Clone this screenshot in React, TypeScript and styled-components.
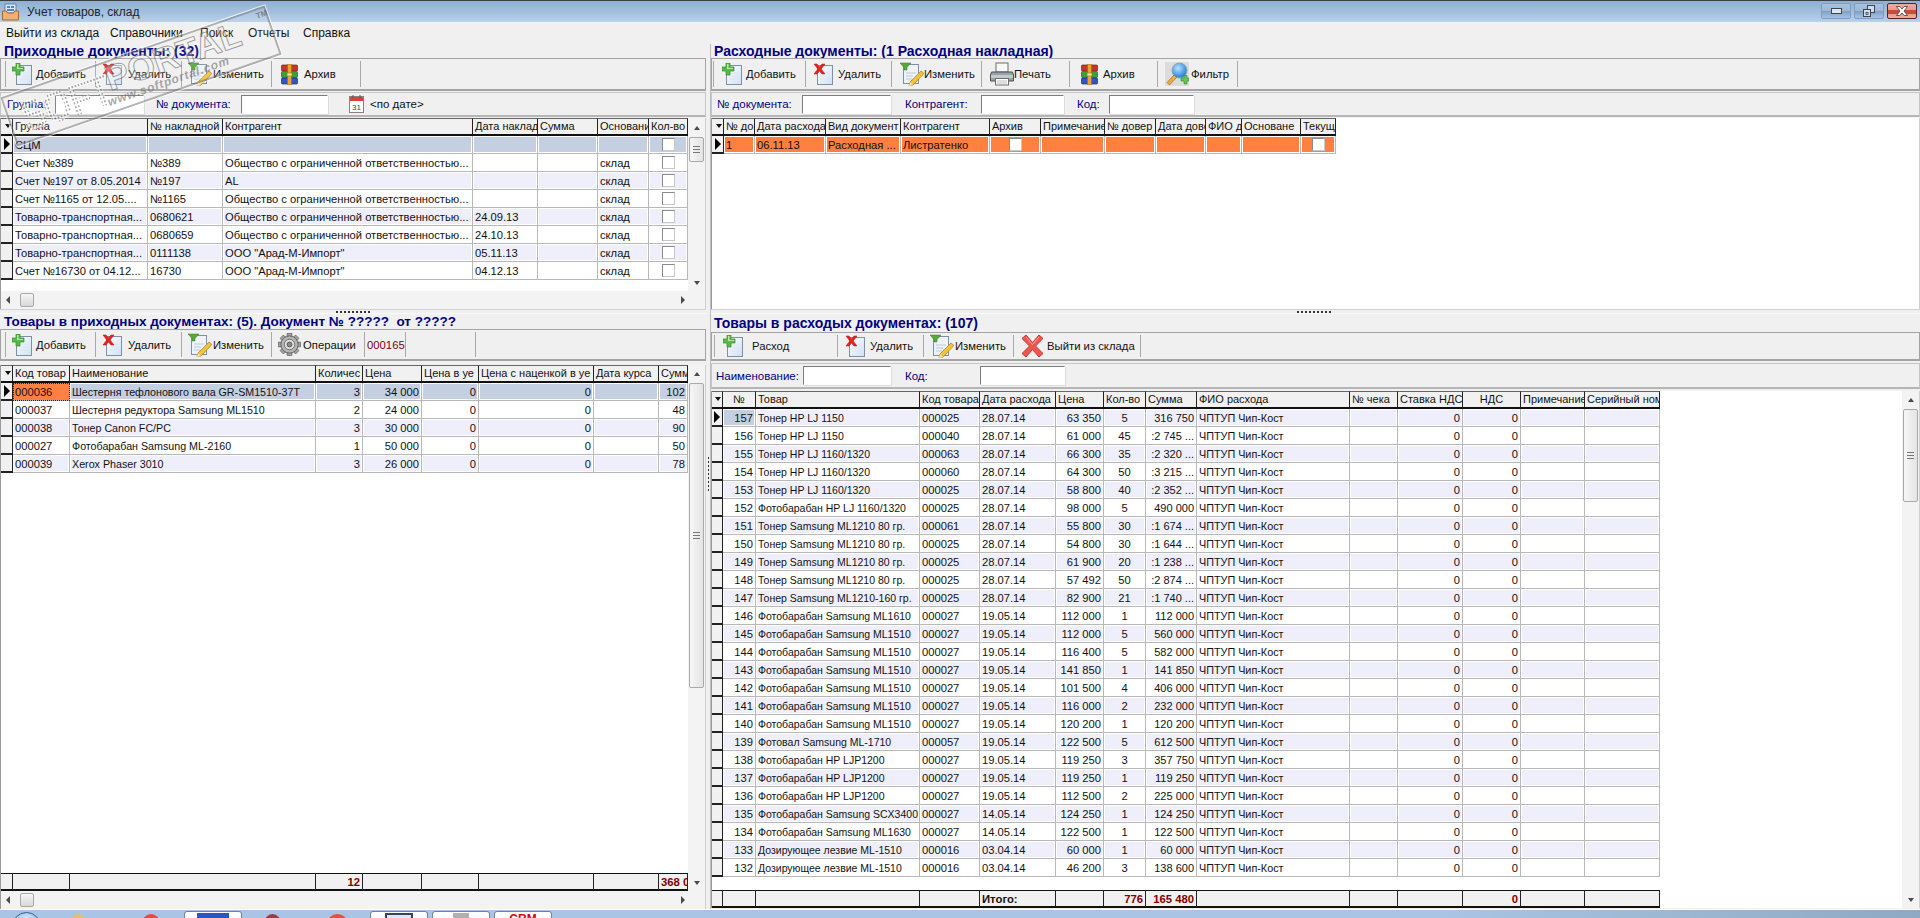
import React from "react";
import styled, { createGlobalStyle } from "styled-components";

const Global = createGlobalStyle`
  html, body { margin: 0; padding: 0; background: #f0f0f0; overflow: hidden; }
  * { box-sizing: border-box; }
`;

const FONT = `"Liberation Sans", Arial, sans-serif`;

const Win = styled.div`
  position: relative;
  width: 1920px;
  height: 918px;
  overflow: hidden;
  display: flex;
  flex-direction: column;
  background: #f0f0f0;
  font-family: ${FONT};
  font-size: 12px;
  color: #111;
`;

const TitleBar = styled.div`
  height: 22px;
  flex: none;
  border-top: 1px solid #3a3f46;
  background: linear-gradient(180deg, #8fb0d2 0%, #a4c0de 55%, #b9d1ea 100%);
  display: flex;
  align-items: center;
  padding-left: 2px;
`;
const TitleText = styled.span`
  margin-left: 8px;
  font-size: 12px;
  color: #1a2430;
`;
const WinButtons = styled.div`
  margin-left: auto;
  margin-right: 3px;
  display: flex;
  gap: 3px;
  align-self: flex-start;
  margin-top: 2px;
`;
const WinButton = styled.div<{ $close?: boolean }>`
  width: 30px;
  height: 16px;
  border: 1px solid ${(p) => (p.$close ? "#5a2028" : "#7f9cbc")};
  border-radius: 2px;
  display: flex;
  align-items: center;
  justify-content: center;
  background: ${(p) =>
    p.$close
      ? "linear-gradient(180deg,#eeaaa0 0%,#e89a90 45%,#cc4a38 46%,#cc4a38 70%,#e69a88 71%,#eeb0a0 100%)"
      : "linear-gradient(180deg,#aac4de 0%,#9cb8d6 50%,#7e9fc4 51%,#a8c4e0 100%)"};
`;

const MenuBar = styled.div`
  height: 22px;
  flex: none;
  display: flex;
  align-items: center;
  padding-left: 6px;
`;
const MenuItem = styled.span<{ $w: number }>`
  width: ${(p) => p.$w}px;
  font-size: 12px;
  white-space: nowrap;
`;

const Main = styled.div`
  flex: 1;
  min-height: 0;
  display: flex;
`;
const Column = styled.div<{ $w?: number }>`
  ${(p) => (p.$w ? `width:${p.$w}px;flex:none;` : "flex:1;min-width:0;")}
  display: flex;
  flex-direction: column;
`;
const VDivider = styled.div`
  width: 5px;
  flex: none;
  position: relative;
  border-right: 1px solid #bdbdbd;
  display: flex;
  align-items: center;
  justify-content: center;
`;
const GripV = styled.div`
  width: 1px;
  height: 34px;
  margin-top: -6px;
  background-image: repeating-linear-gradient(180deg, #333 0 2px, transparent 2px 4px);
`;
const Section = styled.div<{ $h?: number }>`
  ${(p) => (p.$h ? `height:${p.$h}px;flex:none;` : "flex:1;min-height:0;")}
  display: flex;
  flex-direction: column;
`;
const HSplit = styled.div`
  height: 5px;
  flex: none;
  display: flex;
  align-items: flex-start;
  justify-content: flex-end;
  border-bottom: 1px solid #fbfbfb;
  border-top: 1px solid #d0d0d0;
`;
const GripH = styled.div<{ $right: number }>`
  width: 35px;
  height: 2px;
  margin-top: 1px;
  margin-right: ${(p) => p.$right}px;
  background-image: repeating-linear-gradient(90deg, #333 0 2px, transparent 2px 4px);
`;
const Heading = styled.div<{ $h: number; $left: number; $size: number }>`
  height: ${(p) => p.$h}px;
  flex: none;
  display: flex;
  align-items: center;
  padding-left: ${(p) => p.$left}px;
  font-weight: 700;
  font-size: ${(p) => p.$size}px;
  color: #000080;
  white-space: pre;
`;

const Toolbar = styled.div<{ $h: number; $pad: number }>`
  height: ${(p) => p.$h}px;
  flex: none;
  display: flex;
  align-items: stretch;
  padding: 2px 0 2px ${(p) => p.$pad}px;
  border: 1px solid #a3a3a3;
  border-width: 1px 1px 2px 1px;
`;
const ToolBtn = styled.div<{ $w: number; $icon: number; $first?: boolean }>`
  width: ${(p) => p.$w}px;
  flex: none;
  display: flex;
  align-items: center;
  padding-left: ${(p) => p.$icon}px;
  border-right: 1px solid #a8a8a8;
  ${(p) => (p.$first ? "border-left: 1px solid #a8a8a8;" : "")}
  white-space: nowrap;
  font-size: 11.3px;
`;
const ToolLabel = styled.span<{ $gap: number; $color?: string }>`
  margin-left: ${(p) => p.$gap}px;
  color: ${(p) => p.$color || "#111"};
`;

const FilterBar = styled.div<{ $h: number; $pad: number }>`
  height: ${(p) => p.$h}px;
  flex: none;
  display: flex;
  align-items: center;
  padding-left: ${(p) => p.$pad}px;
  border: 1px solid #c6c6c6;
  border-bottom: 2px solid #b5b5b5;
`;
const FilterLabel = styled.span<{ $w: number; $pad?: number }>`
  width: ${(p) => p.$w}px;
  padding-left: ${(p) => p.$pad || 0}px;
  flex: none;
  color: #000080;
  font-size: 11.5px;
  white-space: nowrap;
`;
const FilterInput = styled.div<{ $w: number }>`
  width: ${(p) => p.$w}px;
  height: 19px;
  flex: none;
  background: #fff;
  border: 1px solid #fff;
  border-top: 1px solid #7c7c7c;
  border-left: 1px solid #7c7c7c;
  box-shadow: 1px 1px 0 #dcdcdc;
`;
const DateLabel = styled.span`
  margin-left: 6px;
  font-size: 11.5px;
  color: #111;
`;
const Gap = styled.div<{ $h: number }>`
  height: ${(p) => p.$h}px;
  flex: none;
`;

const GridBox = styled.div`
  flex: 1;
  min-height: 0;
  display: flex;
  flex-direction: column;
  background: #fff;
  border-left: 1px solid #9a9a9a;
  border-right: 1px solid #d0d0d0;
`;
const GridMain = styled.div`
  flex: 1;
  min-height: 0;
  display: flex;
`;
const Table = styled.div`
  flex: 1;
  min-width: 0;
  overflow: hidden;
  display: flex;
  flex-direction: column;
`;
const Row = styled.div<{ $cols: string }>`
  display: grid;
  grid-template-columns: ${(p) => p.$cols};
  height: 18px;
  flex: none;
  width: max-content;
`;
const Spacer = styled.div`
  flex: 1;
  min-height: 0;
`;
const HeadCell = styled.div<{ $center?: boolean }>`
  height: 18px;
  background: #f1f1f1;
  border-top: 1px solid #666;
  border-right: 1px solid #222;
  border-bottom: 2px solid #111;
  padding-left: 2px;
  overflow: hidden;
  white-space: nowrap;
  line-height: 15px;
  font-size: 11px;
  color: #111;
  ${(p) => (p.$center ? "text-align:center;padding-left:0;" : "")}
`;
const toneBg: Record<string, string> = {
  white: "#ffffff",
  alt: "#efeffc",
  sel: "#c4cfe1",
  orange: "#ff8040",
};
const Cell = styled.div<{ $tone: string; $align?: string; $fs?: number }>`
  height: 18px;
  background: ${(p) => toneBg[p.$tone]};
  border-right: 1px solid #b8b8b8;
  border-bottom: 1px solid #b8b8b8;
  box-shadow: ${(p) => (p.$tone === "white" ? "none" : "inset -1px -1px 0 #fff, inset 1px 1px 0 #fff")};
  padding: 0 2px;
  overflow: hidden;
  white-space: nowrap;
  display: flex;
  align-items: center;
  font-size: ${(p) => p.$fs || 11.2}px;
  color: #111;
  justify-content: ${(p) =>
    p.$align === "r" ? "flex-end" : p.$align === "c" ? "center" : "flex-start"};
`;
const FocusCell = styled(Cell)`
  outline: 1px dotted #222;
  outline-offset: -1px;
  box-shadow: none;
`;
const Indicator = styled.div`
  height: 18px;
  background: #f1f1f1;
  border-right: 1px solid #222;
  border-bottom: 2px solid #222;
  display: flex;
  align-items: center;
  justify-content: center;
`;
const SortMark = styled.div`
  width: 0;
  height: 0;
  border-left: 3.5px solid transparent;
  border-right: 3.5px solid transparent;
  border-top: 4px solid #111;
`;
const RowMark = styled.div`
  width: 0;
  height: 0;
  border-top: 6px solid transparent;
  border-bottom: 6px solid transparent;
  border-left: 6px solid #000;
`;
const Check = styled.div`
  width: 13px;
  height: 13px;
  background: #fff;
  border: 1px solid #8a8a8a;
  border-right-color: #c8c8c8;
  border-bottom-color: #c8c8c8;
`;
const FootCell = styled.div<{ $strong?: boolean; $start?: boolean }>`
  height: 18px;
  background: #f1f1f1;
  border-top: 1px solid #111;
  border-right: 1px solid #222;
  border-bottom: 2px solid #111;
  overflow: hidden;
  white-space: nowrap;
  display: flex;
  align-items: center;
  justify-content: ${(p) => (p.$strong || p.$start ? "flex-start" : "flex-end")};
  padding: 0 2px;
  font-weight: 700;
  font-size: 11.3px;
  color: ${(p) => (p.$strong ? "#111" : "#800000")};
`;
const FootLead = styled.div`
  height: 18px;
  background: #f1f1f1;
  border-top: 1px solid #111;
  border-right: 1px solid #222;
  border-bottom: 2px solid #111;
`;

const VScroll = styled.div`
  width: 17px;
  flex: none;
  background: #f3f3f3;
  display: flex;
  flex-direction: column;
  align-items: center;
`;
const HScroll = styled.div`
  height: 18px;
  flex: none;
  background: #f3f3f3;
  display: flex;
  align-items: center;
  padding: 0 20px 0 5px;
`;
const ArrowBox = styled.div<{ $h: number }>`
  height: ${(p) => p.$h}px;
  flex: none;
  display: flex;
  align-items: center;
  justify-content: center;
`;
const ArrowUp = styled.div`
  width: 0;
  height: 0;
  border-left: 3.5px solid transparent;
  border-right: 3.5px solid transparent;
  border-bottom: 4px solid #4a4a4a;
`;
const ArrowDown = styled.div`
  width: 0;
  height: 0;
  border-left: 3.5px solid transparent;
  border-right: 3.5px solid transparent;
  border-top: 4px solid #4a4a4a;
`;
const ArrowLeft = styled.div`
  width: 0;
  height: 0;
  border-top: 4px solid transparent;
  border-bottom: 4px solid transparent;
  border-right: 4px solid #4a4a4a;
`;
const ArrowRight = styled.div`
  width: 0;
  height: 0;
  margin-left: auto;
  border-top: 4px solid transparent;
  border-bottom: 4px solid transparent;
  border-left: 4px solid #4a4a4a;
`;
const Thumb = styled.div`
  background: linear-gradient(90deg, #f6f6f6, #e4e4e4);
  border: 1px solid #a9a9a9;
  border-radius: 2px;
  display: flex;
  align-items: center;
  justify-content: center;
`;
const VThumb = styled(Thumb)<{ $h: number }>`
  width: 15px;
  height: ${(p) => p.$h}px;
  flex: none;
`;
const HThumb = styled(Thumb)`
  width: 14px;
  height: 14px;
  margin-left: 10px;
  background: linear-gradient(180deg, #f6f6f6, #d8d8d8);
`;
const ThumbGrip = styled.div`
  width: 7px;
  height: 7px;
  background-image: repeating-linear-gradient(180deg, #777 0 1px, transparent 1px 3px);
`;
const Push = styled.div`
  flex: 1;
`;

/* Taskbar */
const Taskbar = styled.div`
  position: relative;
  height: 9px;
  flex: none;
  border-top: 1px solid #fff;
  background: linear-gradient(90deg, #a9c4e4 0%, #a9c4e4 75%, #8fa8c4 100%);
  display: flex;
  align-items: flex-start;
  overflow: hidden;
`;
const Orb = styled.div`
  width: 29px;
  height: 29px;
  margin: 2px 0 0 12px;
  border-radius: 50%;
  flex: none;
  border: 1px solid #2f5f96;
  background: radial-gradient(circle at 50% 30%, #dfeefb, #5d96cc);
`;
const TaskBlob = styled.div<{ $left: number; $w: number; $color: string }>`
  width: ${(p) => p.$w}px;
  height: 20px;
  flex: none;
  margin: 4px 0 0 ${(p) => p.$left}px;
  background: ${(p) => p.$color};
  border-radius: 50% 50% 0 0;
`;
const TaskTab = styled.div<{ $left: number }>`
  width: 58px;
  height: 24px;
  flex: none;
  margin: 1px 0 0 ${(p) => p.$left}px;
  background: linear-gradient(180deg, #ffffff, #dfe9f4);
  border: 1px solid #6d829c;
  border-radius: 3px 3px 0 0;
  display: flex;
  justify-content: center;
  padding-top: 1px;
`;
const TaskGlyph = styled.div<{ $w: number; $color: string; $frame?: boolean }>`
  width: ${(p) => p.$w}px;
  height: 14px;
  background: ${(p) => (p.$frame ? "#dfe8f2" : p.$color)};
  ${(p) => (p.$frame ? `border: 2px solid ${p.$color};` : "")}
`;
const CrmText = styled.span`
  color: #cc1010;
  font-weight: 700;
  font-size: 12px;
  line-height: 10px;
  margin-top: 1px;
`;

/* Watermark */
const Watermark = styled.div`
  position: absolute;
  left: 1px;
  top: 50px;
  width: 280px;
  height: 52px;
  transform: rotate(-19.2deg);
  border: 2px solid rgba(110, 110, 110, 0.5);
  outline: 1px solid rgba(255, 255, 255, 0.7);
  background: rgba(255, 255, 255, 0.08);
  pointer-events: none;
  z-index: 5;
  font-family: ${FONT};
`;
const WmSoft = styled.span`
  position: absolute;
  left: 12px;
  top: 2px;
  font-weight: 900;
  font-size: 44px;
  line-height: 46px;
  letter-spacing: -1px;
  transform: scaleX(0.82);
  transform-origin: left center;
  color: transparent;
  background: radial-gradient(circle, rgba(110, 110, 110, 0.6) 1.1px, rgba(255, 255, 255, 0.55) 1.5px) 0 0 / 4px 4px;
  -webkit-background-clip: text;
  background-clip: text;
`;
const WmPortal = styled.span`
  position: absolute;
  left: 104px;
  top: -4px;
  font-weight: 700;
  font-size: 35px;
  line-height: 40px;
  color: rgba(255, 255, 255, 0.3);
  -webkit-text-stroke: 1px rgba(85, 85, 85, 0.55);
`;
const WmSite = styled.span`
  position: absolute;
  left: 98px;
  top: 31px;
  font-size: 12px;
  line-height: 14px;
  font-style: italic;
  font-weight: 700;
  letter-spacing: 0.8px;
  color: rgba(110, 110, 110, 0.6);
`;
const WmTm = styled.span`
  position: absolute;
  right: -2px;
  top: 1px;
  font-size: 8px;
  font-weight: 700;
  color: rgba(100, 100, 100, 0.7);
`;

/* Icons */
const Page = () => (
  <>
    <defs>
      <linearGradient id="pg" x1="0" y1="0" x2="1" y2="1">
        <stop offset="0" stopColor="#ffffff" />
        <stop offset="1" stopColor="#cfe0f4" />
      </linearGradient>
    </defs>
    <rect x="4.5" y="2.5" width="15" height="19" fill="url(#pg)" stroke="#7e8fa6" />
    <path d="M7 10h10M7 13h10M7 16h10" stroke="#dce6f2" />
  </>
);
const AddIcon = () => (
  <svg width="20" height="22" viewBox="0 0 20 22">
    <Page />
    <path d="M4 0h4v4h4v4H8v4H4V8H0V4h4z" fill="#5cb84a" stroke="#2f8a2c" strokeWidth="0.7" />
    <path d="M5 1h1.5v4H11v1H5z" fill="#b6ea9c" />
  </svg>
);
const DelIcon = () => (
  <svg width="20" height="22" viewBox="0 0 20 22">
    <Page />
    <path d="M1 1h3l2.5 3L9 1h3L8.200 6 12 11H9L6.500 8 4 11H1l3.800-5z" fill="#e8231f" stroke="#b01010" strokeWidth="0.5" />
  </svg>
);
const EditIcon = () => (
  <svg width="24" height="24" viewBox="0 0 24 24">
    <rect x="3.500" y="2.500" width="15" height="19" fill="#eef3fb" stroke="#7e8fa6" />
    <path d="M6 11h10M6 14h7M6 17h6" stroke="#bccbdd" />
    <path d="M0 1h11L7 5.500V8H4V5.500z" fill="#58a83c" stroke="#3d7d2a" strokeWidth="0.5" />
    <path d="M21 9l3 2.500L13 23l-4 1 1-4z" fill="#f2c33a" stroke="#a87c18" strokeWidth="0.7" />
    <path d="M10 20l3 3-4 1z" fill="#f6e2b0" />
  </svg>
);
const RarIcon = () => (
  <svg width="17" height="21" viewBox="0 0 17 21">
    <rect x="0.500" y="1" width="16" height="6" rx="1" fill="#c8352c" stroke="#7c1c18" strokeWidth="0.7" />
    <rect x="0.500" y="7.500" width="16" height="6" rx="1" fill="#3e9e3c" stroke="#1f651e" strokeWidth="0.7" />
    <rect x="0.500" y="14" width="16" height="6" rx="1" fill="#2d55c8" stroke="#1a2f80" strokeWidth="0.7" />
    <rect x="6.500" y="0" width="4" height="21" fill="#e8a52c" stroke="#96661a" strokeWidth="0.5" />
    <rect x="6" y="9" width="5" height="3" fill="#f4dca0" stroke="#96661a" strokeWidth="0.5" />
  </svg>
);
const PrinterIcon = () => (
  <svg width="24" height="24" viewBox="0 0 24 24">
    <rect x="6" y="1" width="12" height="9" fill="#f8f8f8" stroke="#6c6c6c" />
    <path d="M1.500 10h21l1 3v6h-23v-6z" fill="#9aa1aa" stroke="#4a4f56" />
    <rect x="1" y="13" width="22" height="3" fill="#c4c9cf" />
    <rect x="5.500" y="16.500" width="13" height="6.500" fill="#ffffff" stroke="#6c6c6c" />
    <circle cx="20" cy="12" r="1" fill="#60d060" />
    <path d="M7 19h10M7 21h10" stroke="#bbb" />
  </svg>
);
const FindIcon = () => (
  <svg width="24" height="24" viewBox="0 0 24 24">
    <defs>
      <radialGradient id="lens" cx="0.400" cy="0.350" r="0.700">
        <stop offset="0" stopColor="#b8e4ff" />
        <stop offset="1" stopColor="#1674d8" />
      </radialGradient>
    </defs>
    <rect x="0" y="0" width="24" height="24" fill="#dcdcdc" />
    <circle cx="14.500" cy="8.500" r="7.500" fill="url(#lens)" stroke="#8aa2b8" />
    <path d="M9 13L2 20.500 4.500 23 11.500 15.500z" fill="#eeaa44" stroke="#9c6c1c" strokeWidth="0.7" />
    <path d="M16 16h3v-2.500h3V16h2v3h-2v3h-3v-3h-3z" fill="#6cc05a" stroke="#2f8a2c" strokeWidth="0.6" />
  </svg>
);
const GearIcon = () => (
  <svg width="23" height="23" viewBox="0 0 24 24">
    <g fill="#a4a4a4" stroke="#5e5e5e" strokeWidth="0.7">
      {[0, 45, 90, 135, 180, 225, 270, 315].map((a) => (
        <rect key={a} x="9.500" y="0.500" width="5" height="6" transform={`rotate(${a} 12 12)`} />
      ))}
    </g>
    <circle cx="12" cy="12" r="9" fill="#b6b6b6" stroke="#5e5e5e" />
    <circle cx="12" cy="12" r="5.500" fill="#dfdfdf" stroke="#6a6a6a" />
    <circle cx="12" cy="12" r="2.500" fill="#8c8c8c" stroke="#555" />
  </svg>
);
const BigXIcon = () => (
  <svg width="21" height="24" viewBox="0 0 21 24">
    <path d="M4 1l6.500 7.500L17 1l4 3.500L13.500 12 21 19.500 17 23l-6.500-7.500L4 23l-4-3.500L7.500 12 0 4.500z" fill="#f0554e" stroke="#c03a34" />
    <path d="M4 3l6.500 7.500L17 3" fill="none" stroke="#ffa8a0" />
  </svg>
);
const CalIcon = () => (
  <svg width="15" height="18" viewBox="0 0 15 18">
    <rect x="0.500" y="1.500" width="14" height="16" fill="#fff" stroke="#8c7f7f" />
    <rect x="1" y="2" width="13" height="4" fill="#d8443c" />
    <path d="M4 0v3M11 0v3" stroke="#555" />
    <text x="7.500" y="15" fontSize="8" fontFamily={FONT} textAnchor="middle" fill="#444">31</text>
  </svg>
);
const AppIcon = () => (
  <svg width="17" height="18" viewBox="0 0 17 18">
    <path d="M3 1h11v9H3z" fill="#dceafa" stroke="#5b82b8" />
    <path d="M5 3h3v2H5zM9 3h3v2H9zM5 6h7v2H5z" fill="#4f86c8" />
    <path d="M0.500 8h4l1 2h6l1-2h4v9h-16z" fill="#f0b070" stroke="#a06a30" />
  </svg>
);
const MinGlyph = () => (
  <svg width="11" height="6" viewBox="0 0 11 6">
    <rect x="0.500" y="0.500" width="10" height="5" fill="#dfe5ec" stroke="#3c4650" />
  </svg>
);
const RestoreGlyph = () => (
  <svg width="12" height="12" viewBox="0 0 12 12">
    <rect x="4.500" y="0.500" width="7" height="7" fill="#cfdcea" stroke="#3c4650" />
    <rect x="0.500" y="4.500" width="7" height="7" fill="#cfdcea" stroke="#3c4650" />
    <rect x="3" y="7.500" width="2" height="2" fill="none" stroke="#3c4650" strokeWidth="0.800" />
  </svg>
);
const CloseGlyph = () => (
  <svg width="12" height="10" viewBox="0 0 12 10">
    <path d="M0.500 0.500h3.300L6 3l2.200-2.500h3.300L8 5l3.500 4.500H8.200L6 7 3.800 9.500H0.500L4 5z" fill="#fff" stroke="#4a3a3a" strokeWidth="0.800" />
  </svg>
);

type Col = { w: number; a?: "r" | "c"; hc?: boolean; footStart?: boolean; fs?: number };
type GridProps = {
  cols: Col[];
  heads: string[];
  rows: string[][];
  tones: string[];
  foot?: string[];
  focusFirst?: boolean;
  selFirstOnly?: boolean;
};

const CHECK = "[]";

function DataTable({ cols, heads, rows, tones, foot, focusFirst, selFirstOnly }: GridProps) {
  const tpl = cols.map((c) => `${c.w}px`).join(" ");
  return (
    <Table>
      <Row $cols={tpl}>
        <HeadCell>
          <ArrowBox $h={13}>
            <SortMark />
          </ArrowBox>
        </HeadCell>
        {heads.map((h, i) => (
          <HeadCell key={i} $center={cols[i + 1].hc}>
            {h}
          </HeadCell>
        ))}
      </Row>
      {rows.map((r, ri) => (
        <Row key={ri} $cols={tpl}>
          <Indicator>{ri === 0 && <RowMark />}</Indicator>
          {r.map((v, ci) => {
            const c = cols[ci + 1];
            const tone = selFirstOnly && ri === 0 ? (ci === 0 ? "sel" : "alt") : tones[ri];
            if (focusFirst && ri === 0 && ci === 0) {
              return (
                <FocusCell key={ci} $tone="orange">
                  {v}
                </FocusCell>
              );
            }
            return (
              <Cell key={ci} $tone={tone} $align={v === CHECK ? "c" : c.a} $fs={c.fs}>
                {v === CHECK ? <Check /> : v}
              </Cell>
            );
          })}
        </Row>
      ))}
      <Spacer />
      {foot && (
        <Row $cols={tpl}>
          <FootLead />
          {foot.map((v, i) => (
            <FootCell key={i} $strong={v === "Итого:"} $start={cols[i + 1].footStart}>
              {v}
            </FootCell>
          ))}
        </Row>
      )}
    </Table>
  );
}

function VBar({ thumb, top }: { thumb: number; top: number }) {
  return (
    <VScroll>
      <ArrowBox $h={top}>
        <ArrowUp />
      </ArrowBox>
      <VThumb $h={thumb}>
        <ThumbGrip />
      </VThumb>
      <Push />
      <ArrowBox $h={17}>
        <ArrowDown />
      </ArrowBox>
    </VScroll>
  );
}
function HBar() {
  return (
    <HScroll>
      <ArrowLeft />
      <HThumb />
      <ArrowRight />
    </HScroll>
  );
}

const g1Cols: Col[] = [12, 135, 75, 250, 65, 60, 51, 39].map((w) => ({ w }));
const g1Heads = ["Группа", "№ накладной", "Контрагент", "Дата наклад", "Сумма", "Основани", "Кол-во"];
const OOO = "Общество с ограниченной ответственностью...";
const g1Rows = [
  ["СЦМ", "", "", "", "", "", CHECK],
  ["Счет №389", "№389", OOO, "", "", "склад", CHECK],
  ["Счет №197 от 8.05.2014", "№197", "AL", "", "", "склад", CHECK],
  ["Счет №1165 от 12.05....", "№1165", OOO, "", "", "склад", CHECK],
  ["Товарно-транспортная...", "0680621", OOO, "24.09.13", "", "склад", CHECK],
  ["Товарно-транспортная...", "0680659", OOO, "24.10.13", "", "склад", CHECK],
  ["Товарно-транспортная...", "0111138", 'ООО "Арад-М-Импорт"', "05.11.13", "", "склад", CHECK],
  ["Счет №16730 от 04.12...", "16730", 'ООО "Арад-М-Импорт"', "04.12.13", "", "склад", CHECK],
];
const g1Tones = ["sel", "white", "alt", "white", "alt", "white", "alt", "white"];

const g2Cols: Col[] = [12, 31, 71, 75, 89, 51, 64, 51, 50, 36, 59, 35].map((w) => ({ w }));
const g2Heads = ["№ док", "Дата расхода", "Вид документ", "Контрагент", "Архив", "Примечание", "№ довер", "Дата дове", "ФИО д", "Основане", "Текущ"];
const g2Rows = [["1", "06.11.13", "Расходная ...", "Листратенко", CHECK, "", "", "", "", "", CHECK]];

const g3Cols: Col[] = [
  { w: 12 },
  { w: 57 },
  { w: 246, fs: 10.7 },
  { w: 47, a: "r" },
  { w: 59, a: "r" },
  { w: 57, a: "r" },
  { w: 115, a: "r" },
  { w: 65 },
  { w: 29, a: "r", footStart: true },
];
const g3Heads = ["Код товар", "Наименование", "Количес", "Цена", "Цена в уе", "Цена с наценкой в уе", "Дата курса", "Сумма"];
const g3Rows = [
  ["000036", "Шестерня тефлонового вала GR-SM1510-37T", "3", "34 000", "0", "0", "", "102"],
  ["000037", "Шестерня редуктора Samsung ML1510", "2", "24 000", "0", "0", "", "48"],
  ["000038", "Тонер Canon FC/PC", "3", "30 000", "0", "0", "", "90"],
  ["000027", "Фотобарабан Samsung ML-2160", "1", "50 000", "0", "0", "", "50"],
  ["000039", "Xerox Phaser 3010", "3", "26 000", "0", "0", "", "78"],
];
const g3Tones = ["sel", "white", "alt", "white", "alt"];
const g3Foot = ["", "", "12", "", "", "", "", "368 000"];

const g4Cols: Col[] = [
  { w: 11 },
  { w: 33, a: "r", hc: true },
  { w: 164, fs: 10.5 },
  { w: 60 },
  { w: 76 },
  { w: 48, a: "r" },
  { w: 42, a: "c" },
  { w: 51, a: "r", fs: 11 },
  { w: 153, fs: 10.8 },
  { w: 48 },
  { w: 65, a: "r" },
  { w: 58, a: "r", hc: true },
  { w: 64 },
  { w: 75 },
];
const g4Heads = ["№", "Товар", "Код товара", "Дата расхода", "Цена", "Кол-во", "Сумма", "ФИО расхода", "№ чека", "Ставка НДС", "НДС", "Примечание", "Серийный ном"];
const CH = "ЧПТУП Чип-Кост";
const make = (n: string, t: string, c: string, d: string, p: string, q: string, s: string) => [n, t, c, d, p, q, s, CH, "", "0", "0", "", ""];
const D1 = "28.07.14";
const D2 = "19.05.14";
const D3 = "14.05.14";
const D4 = "03.04.14";
const T80 = "Тонер Samsung ML1210 80 гр.";
const F15 = "Фотобарабан Samsung ML1510";
const FHP = "Фотобарабан HP LJP1200";
const DZ = "Дозирующее лезвие ML-1510";
const g4Rows = [
  make("157", "Тонер HP LJ 1150", "000025", D1, "63 350", "5", "316 750"),
  make("156", "Тонер HP LJ 1150", "000040", D1, "61 000", "45", ":2 745 ..."),
  make("155", "Тонер HP LJ 1160/1320", "000063", D1, "66 300", "35", ":2 320 ..."),
  make("154", "Тонер HP LJ 1160/1320", "000060", D1, "64 300", "50", ":3 215 ..."),
  make("153", "Тонер HP LJ 1160/1320", "000025", D1, "58 800", "40", ":2 352 ..."),
  make("152", "Фотобарабан HP LJ 1160/1320", "000025", D1, "98 000", "5", "490 000"),
  make("151", T80, "000061", D1, "55 800", "30", ":1 674 ..."),
  make("150", T80, "000025", D1, "54 800", "30", ":1 644 ..."),
  make("149", T80, "000025", D1, "61 900", "20", ":1 238 ..."),
  make("148", T80, "000025", D1, "57 492", "50", ":2 874 ..."),
  make("147", "Тонер Samsung ML1210-160 гр.", "000025", D1, "82 900", "21", ":1 740 ..."),
  make("146", "Фотобарабан Samsung ML1610", "000027", D2, "112 000", "1", "112 000"),
  make("145", F15, "000027", D2, "112 000", "5", "560 000"),
  make("144", F15, "000027", D2, "116 400", "5", "582 000"),
  make("143", F15, "000027", D2, "141 850", "1", "141 850"),
  make("142", F15, "000027", D2, "101 500", "4", "406 000"),
  make("141", F15, "000027", D2, "116 000", "2", "232 000"),
  make("140", F15, "000027", D2, "120 200", "1", "120 200"),
  make("139", "Фотовал Samsung ML-1710", "000057", D2, "122 500", "5", "612 500"),
  make("138", FHP, "000027", D2, "119 250", "3", "357 750"),
  make("137", FHP, "000027", D2, "119 250", "1", "119 250"),
  make("136", FHP, "000027", D2, "112 500", "2", "225 000"),
  make("135", "Фотобарабан Samsung SCX3400", "000027", D3, "124 250", "1", "124 250"),
  make("134", "Фотобарабан Samsung ML1630", "000027", D3, "122 500", "1", "122 500"),
  make("133", DZ, "000016", D4, "60 000", "1", "60 000"),
  make("132", DZ, "000016", D4, "46 200", "3", "138 600"),
];
const g4Tones = g4Rows.map((_, i) => (i % 2 === 0 ? "alt" : "white"));
const g4Foot = ["", "", "", "Итого:", "", "776", "165 480", "", "", "", "0", "", ""];

export default function App() {
  return (
    <Win>
      <Global />
      <TitleBar>
        <AppIcon />
        <TitleText>Учет товаров, склад</TitleText>
        <WinButtons>
          <WinButton>
            <MinGlyph />
          </WinButton>
          <WinButton>
            <RestoreGlyph />
          </WinButton>
          <WinButton $close>
            <CloseGlyph />
          </WinButton>
        </WinButtons>
      </TitleBar>
      <MenuBar>
        <MenuItem $w={104}>Выйти из склада</MenuItem>
        <MenuItem $w={90}>Справочники</MenuItem>
        <MenuItem $w={48}>Поиск</MenuItem>
        <MenuItem $w={55}>Отчеты</MenuItem>
        <MenuItem $w={50}>Справка</MenuItem>
      </MenuBar>
      <Main>
        <Column $w={706}>
          <Section $h={265}>
            <Heading $h={14} $left={4} $size={14}>Приходные документы: (32)</Heading>
            <Toolbar $h={33} $pad={4}>
              <ToolBtn $w={91} $icon={6} $first>
                <AddIcon />
                <ToolLabel $gap={4}>Добавить</ToolLabel>
              </ToolBtn>
              <ToolBtn $w={86} $icon={6}>
                <DelIcon />
                <ToolLabel $gap={6}>Удалить</ToolLabel>
              </ToolBtn>
              <ToolBtn $w={90} $icon={6}>
                <EditIcon />
                <ToolLabel $gap={1}>Изменить</ToolLabel>
              </ToolBtn>
              <ToolBtn $w={89} $icon={9}>
                <RarIcon />
                <ToolLabel $gap={6}>Архив</ToolLabel>
              </ToolBtn>
            </Toolbar>
            <Gap $h={1} />
            <FilterBar $h={25} $pad={6}>
              <FilterLabel $w={48}>Группа:</FilterLabel>
              <FilterInput $w={89} />
              <FilterLabel $w={97} $pad={12}>№ документа:</FilterLabel>
              <FilterInput $w={87} />
              <FilterLabel $w={21} />
              <CalIcon />
              <DateLabel>&lt;по дате&gt;</DateLabel>
            </FilterBar>
            <Gap $h={1} />
            <GridBox>
              <GridMain>
                <DataTable cols={g1Cols} heads={g1Heads} rows={g1Rows} tones={g1Tones} />
                <VBar thumb={25} top={19} />
              </GridMain>
              <HBar />
            </GridBox>
          </Section>
          <HSplit>
            <GripH $right={335} />
          </HSplit>
          <Section>
            <Heading $h={15} $left={4} $size={13.5}>Товары в приходных документах: (5). Документ № ?????  от ?????</Heading>
            <Toolbar $h={32} $pad={4}>
              <ToolBtn $w={91} $icon={6} $first>
                <AddIcon />
                <ToolLabel $gap={4}>Добавить</ToolLabel>
              </ToolBtn>
              <ToolBtn $w={86} $icon={6}>
                <DelIcon />
                <ToolLabel $gap={6}>Удалить</ToolLabel>
              </ToolBtn>
              <ToolBtn $w={90} $icon={6}>
                <EditIcon />
                <ToolLabel $gap={1}>Изменить</ToolLabel>
              </ToolBtn>
              <ToolBtn $w={93} $icon={6}>
                <GearIcon />
                <ToolLabel $gap={2}>Операции</ToolLabel>
              </ToolBtn>
              <ToolBtn $w={41} $icon={2}>
                <ToolLabel $gap={0} $color="#800020">000165</ToolLabel>
              </ToolBtn>
              <ToolBtn $w={70} $icon={0} />
            </Toolbar>
            <Gap $h={4} />
            <GridBox>
              <GridMain>
                <DataTable cols={g3Cols} heads={g3Heads} rows={g3Rows} tones={g3Tones} foot={g3Foot} focusFirst />
                <VBar thumb={305} top={18} />
              </GridMain>
              <HBar />
            </GridBox>
          </Section>
        </Column>
        <VDivider>
          <GripV />
        </VDivider>
        <Column>
          <Section $h={265}>
            <Heading $h={14} $left={3} $size={14}>Расходные документы: (1 Расходная накладная)</Heading>
            <Toolbar $h={33} $pad={1}>
              <ToolBtn $w={93} $icon={8} $first>
                <AddIcon />
                <ToolLabel $gap={4}>Добавить</ToolLabel>
              </ToolBtn>
              <ToolBtn $w={86} $icon={7}>
                <DelIcon />
                <ToolLabel $gap={5}>Удалить</ToolLabel>
              </ToolBtn>
              <ToolBtn $w={90} $icon={8}>
                <EditIcon />
                <ToolLabel $gap={0}>Изменить</ToolLabel>
              </ToolBtn>
              <ToolBtn $w={88} $icon={8}>
                <PrinterIcon />
                <ToolLabel $gap={0}>Печать</ToolLabel>
              </ToolBtn>
              <ToolBtn $w={88} $icon={11}>
                <RarIcon />
                <ToolLabel $gap={5}>Архив</ToolLabel>
              </ToolBtn>
              <ToolBtn $w={80} $icon={7}>
                <FindIcon />
                <ToolLabel $gap={2}>Фильтр</ToolLabel>
              </ToolBtn>
            </Toolbar>
            <Gap $h={1} />
            <FilterBar $h={25} $pad={5}>
              <FilterLabel $w={85}>№ документа:</FilterLabel>
              <FilterInput $w={89} />
              <FilterLabel $w={90} $pad={14}>Контрагент:</FilterLabel>
              <FilterInput $w={83} />
              <FilterLabel $w={45} $pad={13}>Код:</FilterLabel>
              <FilterInput $w={85} />
            </FilterBar>
            <Gap $h={1} />
            <GridBox>
              <GridMain>
                <DataTable cols={g2Cols} heads={g2Heads} rows={g2Rows} tones={["orange"]} />
              </GridMain>
            </GridBox>
          </Section>
          <HSplit>
            <GripH $right={588} />
          </HSplit>
          <Section>
            <Heading $h={18} $left={3} $size={14}>Товары в расходых документах: (107)</Heading>
            <Toolbar $h={29} $pad={2}>
              <ToolBtn $w={124} $icon={8} $first>
                <AddIcon />
                <ToolLabel $gap={9}>Расход</ToolLabel>
              </ToolBtn>
              <ToolBtn $w={86} $icon={7}>
                <DelIcon />
                <ToolLabel $gap={5}>Удалить</ToolLabel>
              </ToolBtn>
              <ToolBtn $w={90} $icon={6}>
                <EditIcon />
                <ToolLabel $gap={1}>Изменить</ToolLabel>
              </ToolBtn>
              <ToolBtn $w={127} $icon={8}>
                <BigXIcon />
                <ToolLabel $gap={4}>Выйти из склада</ToolLabel>
              </ToolBtn>
            </Toolbar>
            <Gap $h={2} />
            <FilterBar $h={26} $pad={4}>
              <FilterLabel $w={87}>Наименование:</FilterLabel>
              <FilterInput $w={88} />
              <FilterLabel $w={89} $pad={14}>Код:</FilterLabel>
              <FilterInput $w={85} />
            </FilterBar>
            <Gap $h={2} />
            <GridBox>
              <GridMain>
                <DataTable cols={g4Cols} heads={g4Heads} rows={g4Rows} tones={g4Tones} foot={g4Foot} selFirstOnly />
                <VBar thumb={93} top={18} />
              </GridMain>
            </GridBox>
            <Gap $h={1} />
          </Section>
        </Column>
      </Main>
      <Taskbar>
        <Orb />
        <TaskBlob $left={30} $w={14} $color="#e8c060" />
        <TaskBlob $left={57} $w={18} $color="#e84a40" />
        <TaskTab $left={24}>
          <TaskGlyph $w={32} $color="#2a55c8" />
        </TaskTab>
        <TaskBlob $left={22} $w={17} $color="#a03a40" />
        <TaskBlob $left={46} $w={21} $color="#e8503c" />
        <TaskTab $left={22}>
          <TaskGlyph $w={28} $color="#334466" $frame />
        </TaskTab>
        <TaskTab $left={4}>
          <TaskGlyph $w={16} $color="#b0b0b0" />
        </TaskTab>
        <TaskTab $left={4}>
          <CrmText>CRM</CrmText>
        </TaskTab>
      </Taskbar>
      <Watermark>
        <WmSoft>SOFT</WmSoft>
        <WmPortal>PORTAL</WmPortal>
        <WmSite>www.softportal.com</WmSite>
        <WmTm>TM</WmTm>
      </Watermark>
    </Win>
  );
}
